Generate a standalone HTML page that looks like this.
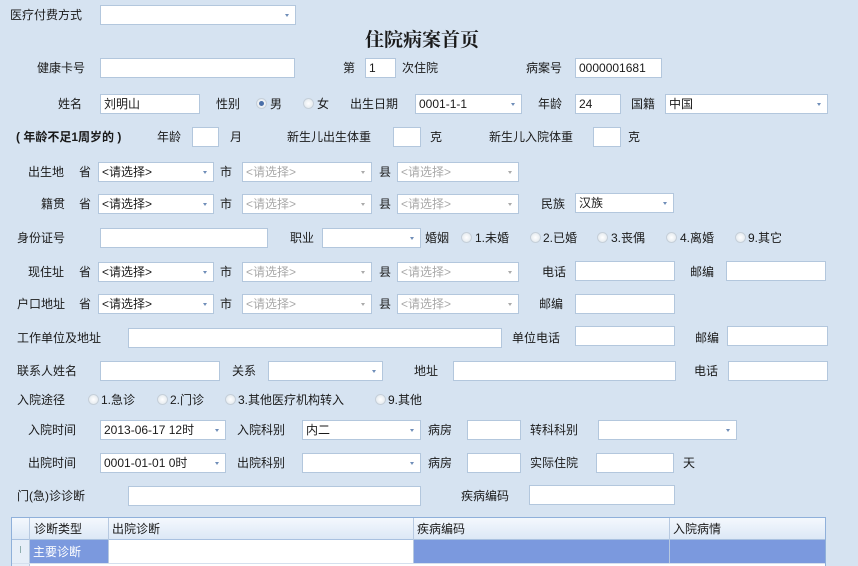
<!DOCTYPE html>
<html><head><meta charset="utf-8"><style>
html,body{margin:0;width:858px;height:566px;overflow:hidden}
body{background:#d6e3f1;font-family:"Liberation Sans","Noto Sans CJK SC",sans-serif;font-size:12px;color:#1a1a1a;position:relative}
.t{position:absolute;line-height:14px;white-space:nowrap}
.b{position:absolute;background:#fff;border:1px solid #b3c7dd;box-sizing:border-box;height:20px;line-height:18px;padding-left:3px;white-space:nowrap}
.c::after{content:"";position:absolute;right:6px;top:8px;border-left:2px solid transparent;border-right:2px solid transparent;border-top:3px solid #6f8db8}
.g{color:#a8a8a8}
.g::after{border-top-color:#aaa}
.r{position:absolute;width:9px;height:9px;border-radius:50%;border:1px solid #c5cfd9;background:radial-gradient(#fff,#dde4ea)}
.r.on::after{content:"";position:absolute;left:2px;top:2px;width:5px;height:5px;border-radius:50%;background:#4a6fa8}
</style></head><body>
<div class="t" style="left:10px;top:8px">医疗付费方式</div>
<div class="b c" style="left:100px;top:5px;width:196px"></div>
<div class="t" style="left:365px;top:28px;font-size:19px;line-height:22px;font-weight:bold;font-family:'Noto Serif CJK SC',serif">住院病案首页</div>

<div class="t" style="left:37px;top:61px">健康卡号</div>
<div class="b" style="left:100px;top:58px;width:195px"></div>
<div class="t" style="left:343px;top:61px">第</div>
<div class="b" style="left:365px;top:58px;width:31px">1</div>
<div class="t" style="left:402px;top:61px">次住院</div>
<div class="t" style="left:526px;top:61px">病案号</div>
<div class="b" style="left:575px;top:58px;width:87px">0000001681</div>

<div class="t" style="left:58px;top:97px">姓名</div>
<div class="b" style="left:100px;top:94px;width:100px">刘明山</div>
<div class="t" style="left:216px;top:97px">性别</div>
<div class="r on" style="left:256px;top:98px"></div><div class="t" style="left:270px;top:97px">男</div>
<div class="r" style="left:303px;top:98px"></div><div class="t" style="left:317px;top:97px">女</div>
<div class="t" style="left:350px;top:97px">出生日期</div>
<div class="b c" style="left:415px;top:94px;width:107px">0001-1-1</div>
<div class="t" style="left:538px;top:97px">年龄</div>
<div class="b" style="left:575px;top:94px;width:46px">24</div>
<div class="t" style="left:631px;top:97px">国籍</div>
<div class="b c" style="left:665px;top:94px;width:163px">中国</div>

<div class="t" style="left:16px;top:130px;font-weight:bold">( 年龄不足1周岁的 )</div>
<div class="t" style="left:157px;top:130px">年龄</div>
<div class="b" style="left:192px;top:127px;width:27px"></div>
<div class="t" style="left:230px;top:130px">月</div>
<div class="t" style="left:287px;top:130px">新生儿出生体重</div>
<div class="b" style="left:393px;top:127px;width:28px"></div>
<div class="t" style="left:430px;top:130px">克</div>
<div class="t" style="left:489px;top:130px">新生儿入院体重</div>
<div class="b" style="left:593px;top:127px;width:28px"></div>
<div class="t" style="left:628px;top:130px">克</div>

<div class="t" style="left:28px;top:165px">出生地</div>
<div class="t" style="left:79px;top:165px">省</div>
<div class="b c" style="left:98px;top:162px;width:116px">&lt;请选择&gt;</div>
<div class="t" style="left:220px;top:165px">市</div>
<div class="b c g" style="left:242px;top:162px;width:130px">&lt;请选择&gt;</div>
<div class="t" style="left:379px;top:165px">县</div>
<div class="b c g" style="left:397px;top:162px;width:122px">&lt;请选择&gt;</div>

<div class="t" style="left:41px;top:197px">籍贯</div>
<div class="t" style="left:79px;top:197px">省</div>
<div class="b c" style="left:98px;top:194px;width:116px">&lt;请选择&gt;</div>
<div class="t" style="left:220px;top:197px">市</div>
<div class="b c g" style="left:242px;top:194px;width:130px">&lt;请选择&gt;</div>
<div class="t" style="left:379px;top:197px">县</div>
<div class="b c g" style="left:397px;top:194px;width:122px">&lt;请选择&gt;</div>
<div class="t" style="left:541px;top:197px">民族</div>
<div class="b c" style="left:575px;top:193px;width:99px">汉族</div>

<div class="t" style="left:17px;top:231px">身份证号</div>
<div class="b" style="left:100px;top:228px;width:168px"></div>
<div class="t" style="left:290px;top:231px">职业</div>
<div class="b c" style="left:322px;top:228px;width:99px"></div>
<div class="t" style="left:425px;top:231px">婚姻</div>
<div class="r" style="left:461px;top:232px"></div><div class="t" style="left:475px;top:231px">1.未婚</div>
<div class="r" style="left:530px;top:232px"></div><div class="t" style="left:543px;top:231px">2.已婚</div>
<div class="r" style="left:597px;top:232px"></div><div class="t" style="left:611px;top:231px">3.丧偶</div>
<div class="r" style="left:666px;top:232px"></div><div class="t" style="left:680px;top:231px">4.离婚</div>
<div class="r" style="left:735px;top:232px"></div><div class="t" style="left:748px;top:231px">9.其它</div>

<div class="t" style="left:28px;top:265px">现住址</div>
<div class="t" style="left:79px;top:265px">省</div>
<div class="b c" style="left:98px;top:262px;width:116px">&lt;请选择&gt;</div>
<div class="t" style="left:220px;top:265px">市</div>
<div class="b c g" style="left:242px;top:262px;width:130px">&lt;请选择&gt;</div>
<div class="t" style="left:379px;top:265px">县</div>
<div class="b c g" style="left:397px;top:262px;width:122px">&lt;请选择&gt;</div>
<div class="t" style="left:542px;top:265px">电话</div>
<div class="b" style="left:575px;top:261px;width:100px"></div>
<div class="t" style="left:690px;top:265px">邮编</div>
<div class="b" style="left:726px;top:261px;width:100px"></div>

<div class="t" style="left:17px;top:297px">户口地址</div>
<div class="t" style="left:79px;top:297px">省</div>
<div class="b c" style="left:98px;top:294px;width:116px">&lt;请选择&gt;</div>
<div class="t" style="left:220px;top:297px">市</div>
<div class="b c g" style="left:242px;top:294px;width:130px">&lt;请选择&gt;</div>
<div class="t" style="left:379px;top:297px">县</div>
<div class="b c g" style="left:397px;top:294px;width:122px">&lt;请选择&gt;</div>
<div class="t" style="left:539px;top:297px">邮编</div>
<div class="b" style="left:575px;top:294px;width:100px"></div>

<div class="t" style="left:17px;top:331px">工作单位及地址</div>
<div class="b" style="left:128px;top:328px;width:374px"></div>
<div class="t" style="left:512px;top:331px">单位电话</div>
<div class="b" style="left:575px;top:326px;width:100px"></div>
<div class="t" style="left:695px;top:331px">邮编</div>
<div class="b" style="left:727px;top:326px;width:101px"></div>

<div class="t" style="left:17px;top:364px">联系人姓名</div>
<div class="b" style="left:100px;top:361px;width:120px"></div>
<div class="t" style="left:232px;top:364px">关系</div>
<div class="b c" style="left:268px;top:361px;width:115px"></div>
<div class="t" style="left:414px;top:364px">地址</div>
<div class="b" style="left:453px;top:361px;width:223px"></div>
<div class="t" style="left:694px;top:364px">电话</div>
<div class="b" style="left:728px;top:361px;width:100px"></div>

<div class="t" style="left:17px;top:393px">入院途径</div>
<div class="r" style="left:88px;top:394px"></div><div class="t" style="left:101px;top:393px">1.急诊</div>
<div class="r" style="left:157px;top:394px"></div><div class="t" style="left:170px;top:393px">2.门诊</div>
<div class="r" style="left:225px;top:394px"></div><div class="t" style="left:238px;top:393px">3.其他医疗机构转入</div>
<div class="r" style="left:375px;top:394px"></div><div class="t" style="left:388px;top:393px">9.其他</div>

<div class="t" style="left:28px;top:423px">入院时间</div>
<div class="b c" style="left:100px;top:420px;width:126px">2013-06-17 12时</div>
<div class="t" style="left:237px;top:423px">入院科别</div>
<div class="b c" style="left:302px;top:420px;width:119px">内二</div>
<div class="t" style="left:428px;top:423px">病房</div>
<div class="b" style="left:467px;top:420px;width:54px"></div>
<div class="t" style="left:530px;top:423px">转科科别</div>
<div class="b c" style="left:598px;top:420px;width:139px"></div>

<div class="t" style="left:28px;top:456px">出院时间</div>
<div class="b c" style="left:100px;top:453px;width:126px">0001-01-01 0时</div>
<div class="t" style="left:237px;top:456px">出院科别</div>
<div class="b c" style="left:302px;top:453px;width:119px"></div>
<div class="t" style="left:428px;top:456px">病房</div>
<div class="b" style="left:467px;top:453px;width:54px"></div>
<div class="t" style="left:530px;top:456px">实际住院</div>
<div class="b" style="left:596px;top:453px;width:78px"></div>
<div class="t" style="left:683px;top:456px">天</div>

<div class="t" style="left:17px;top:489px">门(急)诊诊断</div>
<div class="b" style="left:128px;top:486px;width:293px"></div>
<div class="t" style="left:461px;top:489px">疾病编码</div>
<div class="b" style="left:529px;top:485px;width:146px"></div>

<div style="position:absolute;left:11px;top:517px;width:815px;height:49px;border:1px solid #8fb0da;border-bottom:0;background:#fff;box-sizing:border-box"></div>
<div style="position:absolute;left:12px;top:518px;width:813px;height:21px;background:linear-gradient(#f4f8fd,#dce8f6);border-bottom:1px solid #a9c1e0"></div>
<div class="t" style="left:34px;top:522px">诊断类型</div>
<div class="t" style="left:112px;top:522px">出院诊断</div>
<div class="t" style="left:417px;top:522px">疾病编码</div>
<div class="t" style="left:673px;top:522px">入院病情</div>
<div style="position:absolute;left:12px;top:540px;width:17px;height:26px;background:#e6eef8;border-right:1px solid #b7c9e0;color:#8aa;font-size:10px;text-align:center;line-height:22px">I</div>
<div style="position:absolute;left:30px;top:540px;width:795px;height:23px;background:#7b99de"></div>
<div style="position:absolute;left:109px;top:540px;width:304px;height:23px;background:#fff"></div>
<div class="t" style="left:33px;top:545px;color:#fff">主要诊断</div>
<div style="position:absolute;left:29px;top:518px;width:1px;height:45px;background:#b7c9e0"></div>
<div style="position:absolute;left:108px;top:518px;width:1px;height:45px;background:#b7c9e0"></div>
<div style="position:absolute;left:413px;top:518px;width:1px;height:45px;background:#b7c9e0"></div>
<div style="position:absolute;left:669px;top:518px;width:1px;height:45px;background:#b7c9e0"></div>
<div style="position:absolute;left:12px;top:563px;width:813px;height:1px;background:#d5e0ee"></div>
</body></html>
